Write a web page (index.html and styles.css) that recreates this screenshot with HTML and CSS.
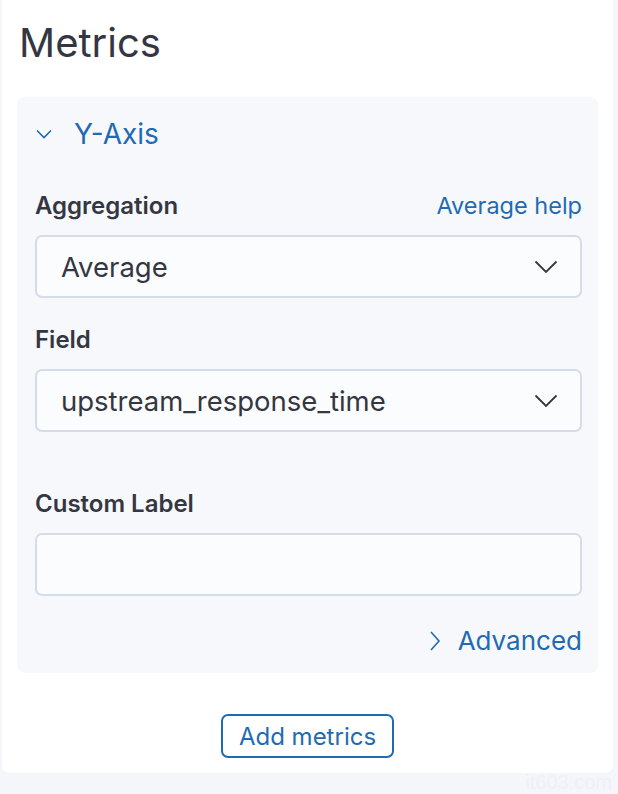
FILE: index.html
```html
<!DOCTYPE html>
<html>
<head>
<meta charset="utf-8">
<link rel="stylesheet" href="styles.css">
</head>
<body>
<div class="panel">
  <h2 class="title">Metrics</h2>
  <div class="section">
    <div class="section-head">
      <svg class="chev-down-small" width="16" height="10" viewBox="0 0 16 10"><path d="M1 1.5 L8 8.5 L15 1.5" fill="none" stroke="#1f6bb3" stroke-width="1.6"/></svg>
      <span class="section-title">Y-Axis</span>
    </div>
    <div class="row-label">
      <span class="label">Aggregation</span>
      <span class="link">Average help</span>
    </div>
    <div class="select">
      <span>Average</span>
      <svg width="24" height="14" viewBox="0 0 24 14"><path d="M1.5 1.5 L12 12 L22.5 1.5" fill="none" stroke="#343741" stroke-width="1.8"/></svg>
    </div>
    <div class="row-label field-label">
      <span class="label">Field</span>
    </div>
    <div class="select">
      <span>upstream_response_time</span>
      <svg width="24" height="14" viewBox="0 0 24 14"><path d="M1.5 1.5 L12 12 L22.5 1.5" fill="none" stroke="#343741" stroke-width="1.8"/></svg>
    </div>
    <div class="row-label custom-label">
      <span class="label">Custom Label</span>
    </div>
    <div class="input"></div>
    <div class="advanced">
      <svg width="12" height="22" viewBox="0 0 12 22"><path d="M2 2 L10 11 L2 20" fill="none" stroke="#1f6bb3" stroke-width="1.6"/></svg>
      <span>Advanced</span>
    </div>
  </div>
  <div class="actions">
    <button class="btn">Add metrics</button>
  </div>
</div>
<div class="watermark">it603.com</div>
</body>
</html>
```
FILE: styles.css
```css
* { box-sizing: border-box; }
html, body {
  margin: 0;
  padding: 0;
  background: #f4f6fa;
  font-family: Inter, "Noto Sans", sans-serif;
  color: #343741;
}
.panel {
  width: 611px;
  margin-left: 2px;
  height: 773px;
  background: #ffffff;
  border-radius: 0 0 8px 8px;
  padding: 0 15px 0 15px;
  display: flex;
  flex-direction: column;
}
.title {
  margin: 19px 0 0 2px;
  font-size: 40px;
  line-height: 48px;
  font-weight: 400;
  color: #343741;
}
.section {
  margin-top: 30px;
  background: #f7f8fb;
  border-radius: 8px;
  padding: 0 16px 0 18px;
  height: 576px;
  display: flex;
  flex-direction: column;
}
.section-head {
  display: flex;
  align-items: center;
  height: 74px;
  gap: 22px;
  padding-left: 1px;
}
.section-title {
  font-size: 28px;
  color: #1f6bb3;
  line-height: 34px;
}
.row-label {
  display: flex;
  justify-content: space-between;
  align-items: baseline;
  margin-top: 20px;
  height: 30px;
}
.label {
  font-size: 24px;
  font-weight: 600;
  color: #343741;
  line-height: 30px;
}
.link {
  font-size: 23.5px;
  color: #1f6bb3;
  line-height: 30px;
}
.select, .input {
  margin-top: 14px;
  height: 63px;
  border: 2px solid #d6dce8;
  border-radius: 7px;
  background: #fbfcfd;
  display: flex;
  align-items: center;
  justify-content: space-between;
  padding: 0 22px 0 24px;
  font-size: 27.5px;
  color: #343741;
}
.field-label { margin-top: 27px; }
.custom-label { margin-top: 57px; }
.advanced {
  display: flex;
  justify-content: flex-end;
  align-items: center;
  gap: 17px;
  margin-top: 29px;
  font-size: 26px;
  color: #1f6bb3;
}
.actions {
  display: flex;
  justify-content: center;
  margin-top: 41px;
}
.btn {
  font-family: Inter, "Noto Sans", sans-serif;
  font-size: 24px;
  color: #1f6bb3;
  background: #fff;
  border: 2px solid #1f6bb3;
  border-radius: 7px;
  height: 44px;
  width: 173px;
  padding: 0;
}
.watermark {
  position: absolute;
  right: 6px;
  top: 771px;
  font-size: 20px;
  color: #eef1f6;
  font-family: "Liberation Sans", sans-serif;
}
```
